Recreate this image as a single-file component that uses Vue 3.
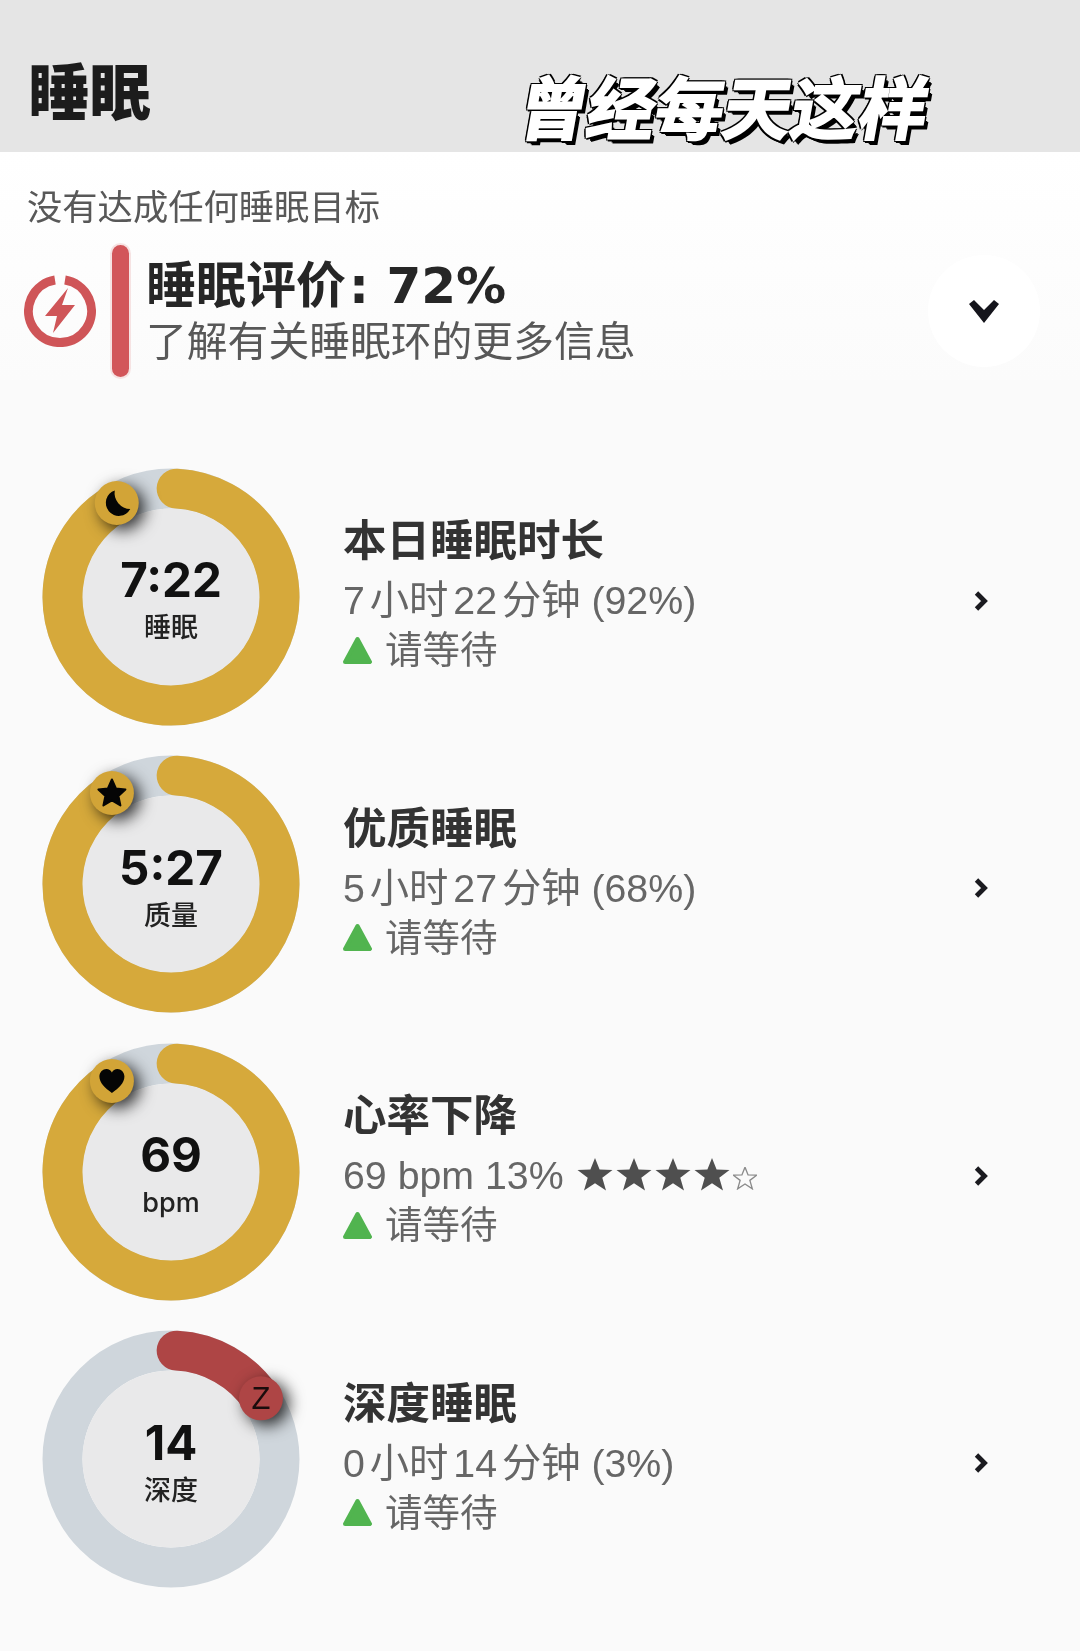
<template>
  <div class="page">
    <header class="topbar">
      <h1 class="title">睡眠</h1>
      <div class="caption">曾经每天这样</div>
    </header>

    <section class="summary">
      <div class="goal">没有达成任何睡眠目标</div>
      <div class="score">
        <svg class="bolt" viewBox="0 0 72 72" width="72" height="72">
          <path d="M41 5 A31.5 31.5 0 1 1 31 5" fill="none" stroke="#cf5558" stroke-width="9" />
          <path d="M44 13 L21 41 H33 L29 58 L51 30 H38 Z" fill="#cf5558" />
        </svg>
        <div class="bar"></div>
        <div class="score-text">
          <div class="score-title">睡眠评价<span class="score-num">: 72%</span></div>
          <div class="score-sub">了解有关睡眠环的更多信息</div>
        </div>
        <div class="toggle">
          <svg viewBox="0 0 30 24" width="30" height="24">
            <path d="M0 4 L5 0 L15 10 L25 0 L30 4 L15 23 Z" fill="#15151c" />
          </svg>
        </div>
      </div>
    </section>

    <section class="list">
      <div class="row" v-for="item in items" :key="item.title">
        <div class="ring">
          <svg viewBox="-129 -129 258 258" width="258" height="258">
            <circle r="108.5" fill="none" stroke="#cfd6dc" stroke-width="40" />
            <circle r="88.5" fill="#e9e9ea" />
            <path :d="arcPath(item.end)" fill="none" :stroke="item.color" stroke-width="40" stroke-linecap="round" />
            <g class="badge" :transform="badgePos(item.end)">
              <circle r="22" :fill="item.badge" />
              <path v-if="item.icon === 'moon'" d="M-2 -12.5 A13 13 0 1 0 13.5 6 A16 16 0 0 1 -2 -12.5 Z" fill="#050505" />
              <path v-if="item.icon === 'star'" d="M0 -13.5 L4 -4.5 L13.5 -3.5 L6.5 3 L8.5 12.5 L0 7.5 L-8.5 12.5 L-6.5 3 L-13.5 -3.5 L-4 -4.5 Z" fill="#050505" stroke="#050505" stroke-width="2" stroke-linejoin="round" />
              <path v-if="item.icon === 'heart'" d="M0 12 C-7 7 -12.5 2 -12.5 -4.5 C-12.5 -9 -9 -12 -5.5 -12 C-3 -12 -1 -10.5 0 -8.5 C1 -10.5 3 -12 5.5 -12 C9 -12 12.5 -9 12.5 -4.5 C12.5 2 7 7 0 12 Z" fill="#050505" />
              <text v-if="item.icon === 'z'" class="z" y="11" text-anchor="middle">Z</text>
            </g>
          </svg>
          <div class="ring-text">
            <div class="ring-value">{{ item.value }}</div>
            <div class="ring-label">{{ item.label }}</div>
          </div>
        </div>
        <div class="info">
          <div class="info-title">{{ item.title }}</div>
          <div class="info-sub">
            <span>{{ item.sub }}</span>
            <span class="stars" v-if="item.stars">
              <svg v-for="n in item.stars" :key="n" viewBox="-18 -17 36 34" width="36" height="34" class="star">
                <path :d="starPath" fill="#4f4f4f" />
              </svg>
              <svg viewBox="-18 -17 36 34" width="24" height="23" class="star-empty">
                <path :d="starPath" fill="none" stroke="#8a8a8a" stroke-width="2" />
              </svg>
            </span>
          </div>
          <div class="info-state">
            <svg viewBox="0 0 28 28" width="29" height="29">
              <path d="M14 3 L26 25 H2 Z" fill="#51b44f" stroke="#51b44f" stroke-width="4" stroke-linejoin="round" />
            </svg>
            <span>请等待</span>
          </div>
        </div>
        <svg class="arrow" viewBox="0 0 14 20" width="14" height="20">
          <path d="M2.5 2 L10.5 10 L2.5 18" fill="none" stroke="#1a1a1f" stroke-width="4.8" />
        </svg>
      </div>
    </section>
  </div>
</template>

<script setup>
const gold = '#d6a93b'
const goldBadge = '#d2a437'
const red = '#ae4545'

const items = [
  { title: '本日睡眠时长', sub: '7小时22分钟 (92%)', value: '7:22', label: '睡眠', end: 330, color: gold, badge: goldBadge, icon: 'moon' },
  { title: '优质睡眠', sub: '5小时27分钟 (68%)', value: '5:27', label: '质量', end: 327, color: gold, badge: goldBadge, icon: 'star' },
  { title: '心率下降', sub: '69 bpm 13%', value: '69', label: 'bpm', end: 327, color: gold, badge: goldBadge, icon: 'heart', stars: 4 },
  { title: '深度睡眠', sub: '0小时14分钟 (3%)', value: '14', label: '深度', end: 56, color: red, badge: red, icon: 'z' },
]

const R = 108.5
const START = 3

const point = (deg) => {
  const a = (deg * Math.PI) / 180
  return [R * Math.sin(a), -R * Math.cos(a)]
}

const arcPath = (end) => {
  const [x0, y0] = point(START)
  const [x1, y1] = point(end)
  const large = end - START > 180 ? 1 : 0
  return `M${x0} ${y0} A${R} ${R} 0 ${large} 1 ${x1} ${y1}`
}

const badgePos = (end) => {
  const [x, y] = point(end)
  return `translate(${x} ${y})`
}

const starPath = 'M0 -17 L4.6 -5.4 L17.5 -5 L7.3 2.8 L11 15.5 L0 8.2 L-11 15.5 L-7.3 2.8 L-17.5 -5 L-4.6 -5.4 Z'
</script>

<style>
body {
  background: #fafafa;
}
</style>

<style scoped>
.page {
  width: 1080px;
  height: 1651px;
  overflow: hidden;
  background: #fafafa;
  font-family: "Liberation Sans", "Noto Sans CJK SC", sans-serif;
  text-autospace: normal;
  filter: blur(0.4px);
}

.topbar {
  position: relative;
  height: 152px;
  box-sizing: border-box;
  padding: 62px 0 0 28px;
  background: #e5e5e5;
}

.title {
  margin: 0;
  font-size: 61.5px;
  line-height: 64px;
  font-weight: 900;
  color: #1c1c1c;
}

.caption {
  position: absolute;
  left: 520px;
  top: 70px;
  font-size: 68px;
  line-height: 80px;
  font-weight: 700;
  color: #fff;
  transform: skewX(-10deg);
  -webkit-text-stroke: 2px #fff;
  text-shadow:
    2.5px 0 0 #000, -2.5px 0 0 #000, 0 2.5px 0 #000, 0 -2.5px 0 #000,
    2px 2px 0 #000, -2px 2px 0 #000, 2px -2px 0 #000, -2px -2px 0 #000,
    4px 4px 0 #000, 5px 5px 0 #000;
}

.summary {
  height: 228px;
  padding-top: 36px;
  box-sizing: border-box;
  background: linear-gradient(#fff, #fbfbfb);
}

.goal {
  padding-left: 27px;
  font-size: 35.3px;
  line-height: 40px;
  color: #585858;
}

.score {
  display: flex;
  align-items: center;
  height: 135px;
  margin-top: 15px;
  padding-left: 24px;
}

.bolt {
  flex: none;
}

.bar {
  flex: none;
  width: 17px;
  height: 132px;
  margin: 0 17px 0 16px;
  border-radius: 9px;
  background: #d2565a;
  box-shadow: 0 0 0 2px #f6e3e3;
}

.score-text {
  flex: 1;
  margin-top: 4px;
}

.score-title {
  font-size: 50px;
  line-height: 56px;
  font-weight: 700;
  color: #262626;
}

.score-num {
  margin-left: 3px;
  font-family: "DejaVu Sans", sans-serif;
}

.score-sub {
  margin-top: 3px;
  font-size: 40.8px;
  line-height: 50px;
  color: #585858;
}

.toggle {
  display: flex;
  flex: none;
  align-items: center;
  justify-content: center;
  width: 112px;
  height: 112px;
  margin-right: 40px;
  border-radius: 50%;
  background: #fff;
}

.toggle svg {
  margin-top: 3px;
}

.list {
  padding-top: 73px;
}

.row {
  display: flex;
  align-items: center;
  height: 287.5px;
}

.ring {
  display: grid;
  flex: none;
  place-items: center;
  width: 258px;
  height: 258px;
  margin-left: 42px;
}

.ring > * {
  grid-area: 1 / 1;
}

.ring svg {
  overflow: visible;
}

.badge {
  filter: drop-shadow(6px 5px 8px rgba(0, 0, 0, 0.8));
}

.z {
  font-size: 31px;
  fill: #1a0c0c;
}

.ring-text {
  position: relative;
  padding-top: 4px;
  text-align: center;
  color: #111;
}

.ring-value {
  font-family: Inter, "Liberation Sans", sans-serif;
  font-size: 47.5px;
  line-height: 58px;
  font-weight: 700;
}

.ring-label {
  margin-top: 1px;
  font-family: Inter, "Noto Sans CJK SC", sans-serif;
  font-size: 27px;
  line-height: 36px;
  font-weight: 500;
  color: #222;
}

.info {
  flex: 1;
  margin-left: 43px;
  padding-bottom: 10px;
}

.info-title {
  font-size: 43.5px;
  line-height: 61px;
  font-weight: 700;
  color: #333;
}

.info-sub {
  display: flex;
  align-items: center;
  font-size: 39.3px;
  line-height: 56px;
  color: #666;
}

.stars {
  display: flex;
  align-items: center;
  gap: 3px;
  margin-left: 13px;
}

.star-empty {
  margin-top: 6px;
}

.info-state {
  display: flex;
  align-items: center;
  gap: 13px;
  font-size: 37.5px;
  line-height: 44px;
  color: #666;
}

.arrow {
  flex: none;
  margin: 8px 92px 0 0;
}
</style>
